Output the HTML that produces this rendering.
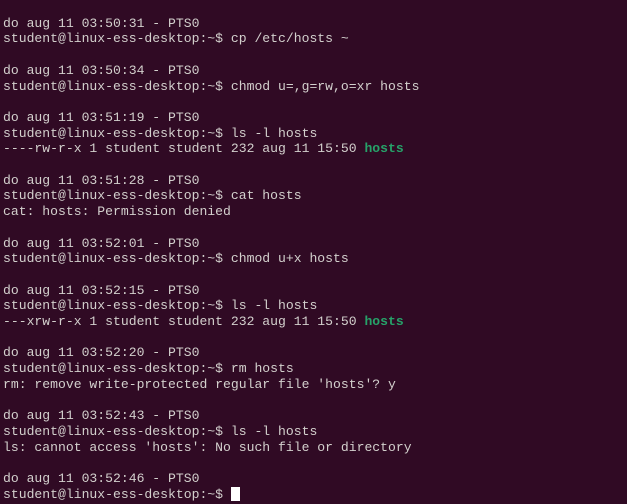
<!DOCTYPE html>
<html><head><style>
html,body{margin:0;padding:0;background:#300a24;width:627px;height:504px;overflow:hidden}
pre{margin:0;padding:0 0 0 3px;font-family:"Liberation Mono",monospace;font-size:13.1px;line-height:15.7px;color:#d3d0cd;font-weight:normal}
.g{color:#26a269;font-weight:bold}
.c{display:inline-block;width:9px;height:14px;background:#fff;vertical-align:-3px}
</style></head><body><pre>&#8203;
do aug 11 03:50:31 - PTS0
student@linux-ess-desktop:~$ cp /etc/hosts ~

do aug 11 03:50:34 - PTS0
student@linux-ess-desktop:~$ chmod u=,g=rw,o=xr hosts

do aug 11 03:51:19 - PTS0
student@linux-ess-desktop:~$ ls -l hosts
----rw-r-x 1 student student 232 aug 11 15:50 <span class="g">hosts</span>

do aug 11 03:51:28 - PTS0
student@linux-ess-desktop:~$ cat hosts
cat: hosts: Permission denied

do aug 11 03:52:01 - PTS0
student@linux-ess-desktop:~$ chmod u+x hosts

do aug 11 03:52:15 - PTS0
student@linux-ess-desktop:~$ ls -l hosts
---xrw-r-x 1 student student 232 aug 11 15:50 <span class="g">hosts</span>

do aug 11 03:52:20 - PTS0
student@linux-ess-desktop:~$ rm hosts
rm: remove write-protected regular file 'hosts'? y

do aug 11 03:52:43 - PTS0
student@linux-ess-desktop:~$ ls -l hosts
ls: cannot access 'hosts': No such file or directory

do aug 11 03:52:46 - PTS0
student@linux-ess-desktop:~$ <span class="c"></span></pre></body></html>
